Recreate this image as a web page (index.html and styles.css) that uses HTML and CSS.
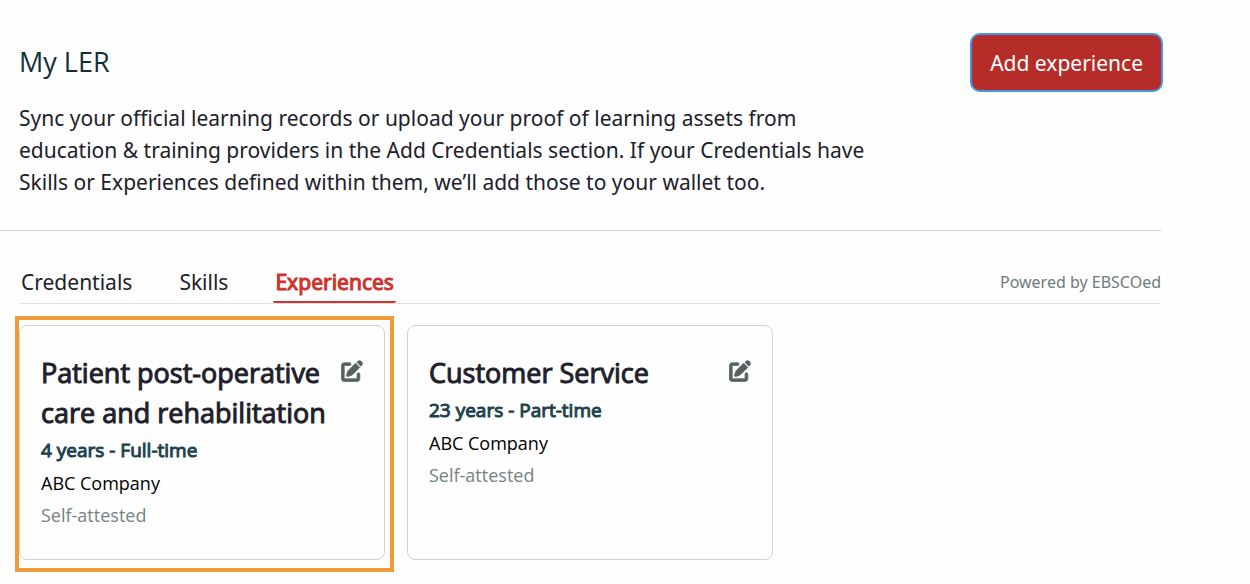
FILE: index.html
```html
<!DOCTYPE html>
<html lang="en">
<head>
<meta charset="utf-8">
<title>My LER</title>
<link rel="stylesheet" href="styles.css">
</head>
<body>
<svg class="sprite" aria-hidden="true">
  <symbol id="edit" viewBox="0 0 512 512">
    <path d="M471.6 21.7c-21.9-21.9-57.3-21.9-79.2 0L362.3 51.7l97.9 97.9 30.1-30.1c21.9-21.9 21.9-57.3 0-79.2L471.6 21.7z"/>
    <path stroke="currentColor" stroke-width="18" d="M172.3 241.7c-6.1 6.1-10.8 13.6-13.5 21.9l-29.6 88.8c-2.9 8.6-.6 18.1 5.8 24.6s15.9 8.7 24.6 5.8l88.8-29.6c8.2-2.7 15.7-7.4 21.9-13.5L437.7 172.3 339.7 74.3 172.4 241.7z"/>
    <path stroke="currentColor" stroke-width="18" d="M80 64C36 64 10 92 10 134V432c0 42 28 70 70 70H368c42 0 70-28 70-70V330c0-17.7-14.3-32-32-32s-32 14.3-32 32v92c0 10-6 16-16 16H90c-10 0-16-6-16-16V144c0-10 6-16 16-16h112c17.7 0 32-14.3 32-32s-14.3-32-32-32H80z"/>
  </symbol>
</svg>
<main class="page">
  <header class="intro">
    <div class="intro-text">
      <h1 class="title">My LER</h1>
      <p class="lead">Sync your official learning records or upload your proof of learning assets from education &amp; training providers in the Add Credentials section. If your Credentials have Skills or Experiences defined within them, we’ll add those to your wallet too.</p>
    </div>
    <button class="add" type="button">Add experience</button>
  </header>
  <section class="content">
    <div class="tab-bar">
      <nav class="tabs">
        <a class="tab" href="#credentials">Credentials</a>
        <a class="tab" href="#skills">Skills</a>
        <a class="tab tab-active" href="#experiences" aria-current="page">Experiences</a>
      </nav>
      <span class="powered">Powered by EBSCOed</span>
    </div>
    <div class="cards">
      <article class="card card-highlight">
        <div class="card-head">
          <h2 class="card-title">Patient post-operative care and rehabilitation</h2>
          <button class="edit" type="button" aria-label="Edit Patient post-operative care and rehabilitation"><svg class="edit-icon"><use href="#edit"/></svg></button>
        </div>
        <p class="duration">4 years - Full-time</p>
        <p class="company">ABC Company</p>
        <p class="status">Self-attested</p>
      </article>
      <article class="card">
        <div class="card-head">
          <h2 class="card-title">Customer Service</h2>
          <button class="edit" type="button" aria-label="Edit Customer Service"><svg class="edit-icon"><use href="#edit"/></svg></button>
        </div>
        <p class="duration">23 years - Part-time</p>
        <p class="company">ABC Company</p>
        <p class="status">Self-attested</p>
      </article>
    </div>
  </section>
</main>
</body>
</html>
```
FILE: styles.css
```css
* { box-sizing: border-box; }

body {
  margin: 0;
  background: #fefefe;
  color: #20202a;
  font-family: "Noto Sans", "Open Sans", sans-serif;
  font-size: 21px;
  line-height: 32px;
}

h1, h2, p { margin: 0; }

.sprite { display: none; }

.page { padding-right: 89px; }

.intro {
  display: flex;
  justify-content: space-between;
  align-items: flex-start;
  padding: 33px 0 32px 19px;
  border-bottom: 1px solid #d0d2d2;
}

.intro-text {
  max-width: 870px;
  padding-top: 9px;
}

.title {
  color: #12303a;
  font-family: "Open Sans", "Noto Sans", sans-serif;
  font-size: 27px;
  font-weight: 400;
  line-height: 40px;
}

.lead { padding-top: 20px; }

.add {
  flex: none;
  height: 59px;
  margin-right: -2px;
  padding: 0 18px;
  border: 2px solid #4296e4;
  border-radius: 10px;
  background: #b52d28;
  color: #fff;
  font: inherit;
}

.content { padding: 32px 0 24px 19px; }

.tab-bar {
  display: flex;
  justify-content: space-between;
  border-bottom: 1px solid #e0e2e2;
}

.tabs {
  display: flex;
  gap: 43px;
}

.tab {
  padding: 3px 2px;
  border-bottom: 2px solid transparent;
  color: inherit;
  text-decoration: none;
}

.tab-active {
  border-color: #cd322d;
  border-radius: 2px;
  color: #cd322d;
  -webkit-text-stroke: 1px;
}

.powered {
  padding-top: 3px;
  color: #6e7b7b;
  font-size: 16px;
}

.cards {
  display: grid;
  grid-template-columns: repeat(3, 1fr);
  gap: 22px;
  padding-top: 21px;
}

.card {
  position: relative;
  min-height: 235px;
  padding: 27px 21px;
  border: 1px solid #d0d2d2;
  border-radius: 8px;
  font-family: "Open Sans", "Noto Sans", sans-serif;
  font-size: 18px;
}

.card-highlight::after {
  content: "";
  position: absolute;
  inset: -10px -10px -13px -5px;
  border: 4px solid #f09a38;
  pointer-events: none;
}

.card-head {
  display: flex;
  justify-content: space-between;
  align-items: flex-start;
}

.card-title {
  font-size: 27px;
  font-weight: 400;
  line-height: 40px;
  -webkit-text-stroke: 1px;
}

.edit {
  flex: none;
  margin-top: 7px;
  padding: 0;
  border: 0;
  background: none;
  color: #566161;
}

.edit-icon {
  display: block;
  width: 22px;
  height: 22px;
  fill: currentColor;
}

.duration {
  color: #1d424e;
  font-size: 19px;
  line-height: 34px;
  -webkit-text-stroke: 1px;
}

.company { color: #000; }

.status { color: #768282; }
```
